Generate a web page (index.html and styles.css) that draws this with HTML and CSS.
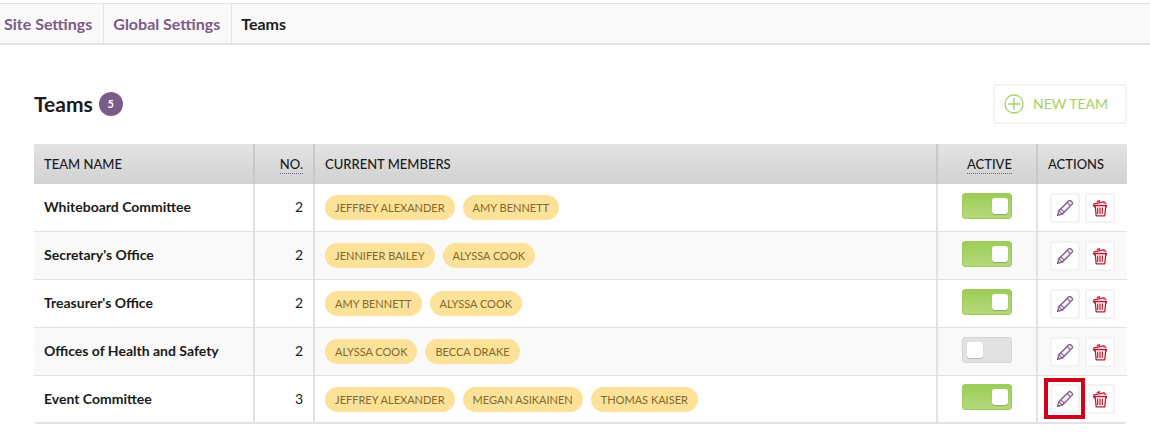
FILE: index.html
```html
<!DOCTYPE html>
<html lang="en">
<head>
  <meta charset="UTF-8">
  <title>Teams</title>
  <link rel="stylesheet" href="styles.css">
</head>
<body>
  <svg class="sprites" width="0" height="0">
    <symbol id="pencil" viewBox="0 0 18 18">
      <path d="M1.6 16.4l1.2-4.6L12.600 2a1.600 1.600 0 0 1 2.300 0l1.100 1.100a1.600 1.600 0 0 1 0 2.300L6.200 15.200z" fill="#f1edf3" stroke="currentColor" stroke-width="1.300" stroke-linejoin="round"/>
      <path d="M2.800 11.800l3.400 3.400M4.800 9.800l3.400 3.400M11.200 3.400l3.400 3.400" fill="none" stroke="currentColor" stroke-width="1.100"/>
    </symbol>
    <symbol id="trash" viewBox="0 0 16 18">
      <path d="M1 4.600l11.500-2.600.3 1.200L1.300 5.800zM5 3.200l-.3-1.300 3.200-.8.300 1.300" fill="currentColor"/>
      <path d="M1.500 6.500h13v1.300h-.8l-.9 9h-8.600l-.9-9h-.8z" fill="none" stroke="currentColor" stroke-width="1.300" stroke-linejoin="round"/>
      <path d="M5.700 8.500v6.500M8 8.500v6.500M10.300 8.500v6.500" stroke="currentColor" stroke-width="1.200"/>
      <path d="M11.500 3.400h3v1.200h-3z" fill="currentColor"/>
    </symbol>
  </svg>

  <nav class="tabs">
    <a class="tab" href="#">Site Settings</a>
    <a class="tab" href="#">Global Settings</a>
    <a class="tab current" href="#">Teams</a>
  </nav>

  <main class="content">
    <div class="page-head">
      <h1>Teams</h1>
      <span class="count">5</span>
      <a class="new-team" href="#">
        <svg width="20" height="20" viewBox="0 0 20 20"><circle cx="10" cy="10" r="9" fill="none" stroke="currentColor" stroke-width="1.300"/><path d="M10 4v12M4 10h12" stroke="currentColor" stroke-width="1.300"/></svg>
        NEW TEAM
      </a>
    </div>

    <table class="teams">
      <thead>
        <tr>
          <th class="col-name">Team Name</th>
          <th class="col-no"><span class="hint">No.</span></th>
          <th class="col-members">Current Members</th>
          <th class="col-active"><span class="hint">Active</span></th>
          <th class="col-actions">Actions</th>
        </tr>
      </thead>
      <tbody>
        <tr>
          <td class="team">Whiteboard Committee</td>
          <td class="num">2</td>
          <td><span class="pill">Jeffrey Alexander</span><span class="pill">Amy Bennett</span></td>
          <td class="center"><span class="toggle on"></span></td>
          <td><div class="actions">
            <a class="btn edit" href="#"><svg width="18" height="18"><use href="#pencil"/></svg></a>
            <a class="btn del" href="#"><svg width="16" height="18"><use href="#trash"/></svg></a>
          </div></td>
        </tr>
        <tr>
          <td class="team">Secretary's Office</td>
          <td class="num">2</td>
          <td><span class="pill">Jennifer Bailey</span><span class="pill">Alyssa Cook</span></td>
          <td class="center"><span class="toggle on"></span></td>
          <td><div class="actions">
            <a class="btn edit" href="#"><svg width="18" height="18"><use href="#pencil"/></svg></a>
            <a class="btn del" href="#"><svg width="16" height="18"><use href="#trash"/></svg></a>
          </div></td>
        </tr>
        <tr>
          <td class="team">Treasurer's Office</td>
          <td class="num">2</td>
          <td><span class="pill">Amy Bennett</span><span class="pill">Alyssa Cook</span></td>
          <td class="center"><span class="toggle on"></span></td>
          <td><div class="actions">
            <a class="btn edit" href="#"><svg width="18" height="18"><use href="#pencil"/></svg></a>
            <a class="btn del" href="#"><svg width="16" height="18"><use href="#trash"/></svg></a>
          </div></td>
        </tr>
        <tr>
          <td class="team">Offices of Health and Safety</td>
          <td class="num">2</td>
          <td><span class="pill">Alyssa Cook</span><span class="pill">Becca Drake</span></td>
          <td class="center"><span class="toggle"></span></td>
          <td><div class="actions">
            <a class="btn edit" href="#"><svg width="18" height="18"><use href="#pencil"/></svg></a>
            <a class="btn del" href="#"><svg width="16" height="18"><use href="#trash"/></svg></a>
          </div></td>
        </tr>
        <tr>
          <td class="team">Event Committee</td>
          <td class="num">3</td>
          <td><span class="pill">Jeffrey Alexander</span><span class="pill">Megan Asikainen</span><span class="pill">Thomas Kaiser</span></td>
          <td class="center"><span class="toggle on"></span></td>
          <td><div class="actions">
            <a class="btn edit marked" href="#"><svg width="18" height="18"><use href="#pencil"/></svg></a>
            <a class="btn del" href="#"><svg width="16" height="18"><use href="#trash"/></svg></a>
          </div></td>
        </tr>
      </tbody>
    </table>
  </main>
</body>
</html>
```

FILE: styles.css
```css
* {
  margin: 0;
  padding: 0;
  box-sizing: border-box;
}

body {
  font-family: 'Lato', sans-serif;
  background: #fff;
  color: #1a1a1a;
  padding-top: 3px;
}

a {
  text-decoration: none;
}

.sprites {
  position: absolute;
}

/* tabs */
.tabs {
  display: flex;
  height: 42px;
  background: #f9f9f9;
  border-top: 1px solid #e4e4e4;
  border-bottom: 2px solid #e2e2e2;
}

.tab {
  padding: 0 11px 0 9px;
  line-height: 39px;
  font-size: 16px;
  font-weight: 700;
  color: #7b5b87;
  border-right: 1px solid #e2e2e2;
}

.tab:first-child {
  padding-left: 4px;
}

.tab.current {
  color: #1a1a1a;
  border-right: none;
}

/* page */
.content {
  padding: 39px 23px 0 34px;
}

.page-head {
  display: flex;
  align-items: center;
  height: 40px;
  margin-bottom: 20px;
}

h1 {
  font-size: 21px;
  font-weight: 700;
  line-height: 40px;
}

.count {
  width: 24px;
  height: 24px;
  margin-left: 6px;
  border-radius: 50%;
  background: #7b5b87;
  color: #fff;
  font-size: 11px;
  font-weight: 700;
  line-height: 24px;
  text-align: center;
}

.new-team {
  display: flex;
  align-items: center;
  gap: 9px;
  width: 134px;
  height: 40px;
  margin-left: auto;
  padding-left: 9px;
  border: 2px solid #f3f3f3;
  border-radius: 2px;
  color: #a5d161;
  font-size: 14px;
  line-height: 34px;
}

/* table */
.teams {
  width: 1093px;
  table-layout: fixed;
  border-collapse: separate;
  border-spacing: 0;
  font-size: 14px;
}

.teams th {
  height: 40px;
  padding: 0 10px;
  background: linear-gradient(#e3e3e3, #d2d2d2);
  border-right: 2px solid #c8c8c8;
  font-weight: 500;
  font-size: 13px;
  text-align: left;
  text-transform: uppercase;
  color: #1a1a1a;
}

.teams th:last-child,
.teams td:last-child {
  border-right: none;
}

.col-name { width: 221px; }
.col-no { width: 60px; }
.col-members { width: 623px; }
.col-active { width: 100px; }

.teams th.col-no {
  text-align: right;
}

.teams th.col-active {
  padding-right: 24px;
  text-align: right;
}

.hint {
  padding-bottom: 1px;
  border-bottom: 1px dotted #7b5b87;
}

.teams td {
  height: 48px;
  padding: 0 10px;
  border-right: 2px solid #e2e2e2;
  border-bottom: 1px solid #e2e2e2;
}

.teams tbody tr:nth-child(even) td {
  background: #f9f9f9;
}

.teams tbody tr:last-child td {
  border-bottom-width: 2px;
}

.teams tbody tr:last-child td:first-child {
  border-bottom-left-radius: 4px;
}

.teams tbody tr:last-child td:last-child {
  border-bottom-right-radius: 4px;
}

.teams td.team {
  padding-bottom: 2px;
  font-weight: 700;
}

.teams td.num {
  padding-bottom: 2px;
  text-align: right;
}

.center {
  text-align: center;
}

.pill {
  display: inline-block;
  height: 25px;
  margin-right: 8px;
  padding: 0 10px;
  border-radius: 13px;
  background: #fbe298;
  color: #7f6a2c;
  font-size: 11px;
  line-height: 25px;
  text-transform: uppercase;
  vertical-align: middle;
}

/* switch */
.toggle {
  display: inline-flex;
  align-items: center;
  width: 50px;
  height: 26px;
  margin-bottom: 4px;
  padding: 0 4px;
  border: 1px solid #d4d4d4;
  border-radius: 3px;
  background: #e2e2e2;
  vertical-align: middle;
}

.toggle::after {
  content: "";
  width: 16px;
  height: 16px;
  border-radius: 3px;
  background: #fff;
  box-shadow: 0 1px 1px rgba(0, 0, 0, 0.2);
}

.toggle.on {
  justify-content: flex-end;
  padding: 0 3px;
  border-color: #9dcd59;
  background: linear-gradient(#9ccd56, #b4d97c);
}

/* row buttons */
.actions {
  display: flex;
  gap: 5px;
  padding-left: 2px;
}

.btn {
  position: relative;
  display: flex;
  align-items: center;
  justify-content: center;
  width: 30px;
  height: 30px;
  border: 2px solid #f3f3f3;
  border-radius: 3px;
  background: #fff;
}

.edit {
  color: #7b5b87;
}

.del {
  color: #c0182f;
}

.marked {
  z-index: 1;
}

.marked::after {
  content: "";
  box-sizing: border-box;
  position: absolute;
  left: -8px;
  top: -8px;
  width: 41px;
  height: 41px;
  border: 4px solid #d0021b;
}
```
